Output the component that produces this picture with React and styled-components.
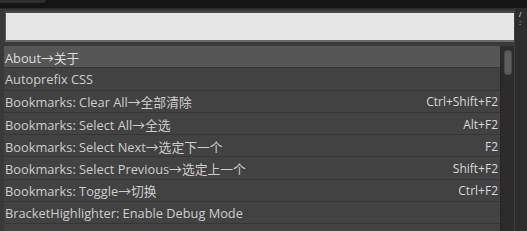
import styled, { createGlobalStyle } from "styled-components"

const GlobalStyle = createGlobalStyle`
  html, body {
    margin: 0;
    padding: 0;
    background: #161616;
    overflow: hidden;
  }
`;

const Window = styled.div`
  width: 527px;
  height: 231px;
  display: flex;
  flex-direction: column;
  background: #161616;
  font-family: "Open Sans", "Noto Sans CJK SC", sans-serif;
  overflow: hidden;
`;

const TabStrip = styled.div`
  height: 8px;
  display: flex;
  background: #141414;
`;

const Tab = styled.div`
  width: 46px;
  height: 3px;
  background: #2e2e2e;
  border-bottom-right-radius: 4px;
`;

const Body = styled.div`
  flex: 1;
  display: flex;
  min-height: 0;
`;

const Palette = styled.div`
  width: 514px;
  display: flex;
  flex-direction: column;
  background: #393939;
  border-top: 1px solid #2b2b2b;
  padding: 2px 0 0 4px;
  box-sizing: border-box;
`;

const Input = styled.input`
  display: block;
  width: 510px;
  height: 31px;
  margin: 0 0 4px 1px;
  box-sizing: border-box;
  background: #e6e6e6;
  border: 1px solid #5a5a5a;
  border-top: 2px solid #4a4a4a;
  border-bottom: 2px solid #6a6a6a;
  outline: none;
`;

const ListArea = styled.div`
  flex: 1;
  display: flex;
  min-height: 0;
`;

const List = styled.div`
  flex: 1;
  display: flex;
  flex-direction: column;
`;

const Row = styled.div`
  height: 22.3px;
  flex: none;
  display: flex;
  align-items: center;
  justify-content: space-between;
  padding: 1px 2px 0 1px;
  box-sizing: border-box;
  background: ${(p) => (p.$selected ? "#565656" : "#424242")};
  border-bottom: 1px solid #363636;
  color: ${(p) => (p.$selected ? "#dcdcdc" : "#cdcdcd")};
  font-size: 12.8px;
  white-space: nowrap;
`;

const Keys = styled.span`
  font-size: 12px;
  color: #d8d8d8;
`;

const ScrollTrack = styled.div`
  width: 14px;
  background: #2c2c2c;
  border-left: 1px solid #262626;
  display: flex;
  justify-content: center;
  padding-top: 4px;
  box-sizing: border-box;
`;

const Thumb = styled.div`
  width: 6px;
  height: 23px;
  border-radius: 3px;
  background: #5c5c5c;
  border: 1px solid #4a4a4a;
`;

const SidePanel = styled.div`
  flex: 1;
  display: flex;
  flex-direction: column;
  background: #2d2d2d;
  border-left: 1px solid #3e3e3e;
  color: #e0e0e0;
  padding: 3px 0 0 4px;
  font-family: "Liberation Sans", sans-serif;
`;

const SideMark = styled.span`
  display: block;
  height: 8px;
  font-size: 8px;
  line-height: 8px;
`;

const items = [
  { label: "About→关于", selected: true },
  { label: "Autoprefix CSS" },
  { label: "Bookmarks: Clear All→全部清除", keys: "Ctrl+Shift+F2" },
  { label: "Bookmarks: Select All→全选", keys: "Alt+F2" },
  { label: "Bookmarks: Select Next→选定下一个", keys: "F2" },
  { label: "Bookmarks: Select Previous→选定上一个", keys: "Shift+F2" },
  { label: "Bookmarks: Toggle→切换", keys: "Ctrl+F2" },
  { label: "BracketHighlighter: Enable Debug Mode" },
  { label: "BracketHighlighter: Fold Bracket Content" },
];

const App = () => {
  return (
    <Window>
      <GlobalStyle />
      <TabStrip>
        <Tab />
      </TabStrip>
      <Body>
        <Palette>
          <Input />
          <ListArea>
            <List>
              {items.map((it) => (
                <Row key={it.label} $selected={it.selected}>
                  <span>{it.label}</span>
                  {it.keys && <Keys>{it.keys}</Keys>}
                </Row>
              ))}
            </List>
            <ScrollTrack>
              <Thumb />
            </ScrollTrack>
          </ListArea>
        </Palette>
        <SidePanel>
          <SideMark>/</SideMark>
          <SideMark>:</SideMark>
        </SidePanel>
      </Body>
    </Window>
  )
}

export default App;
